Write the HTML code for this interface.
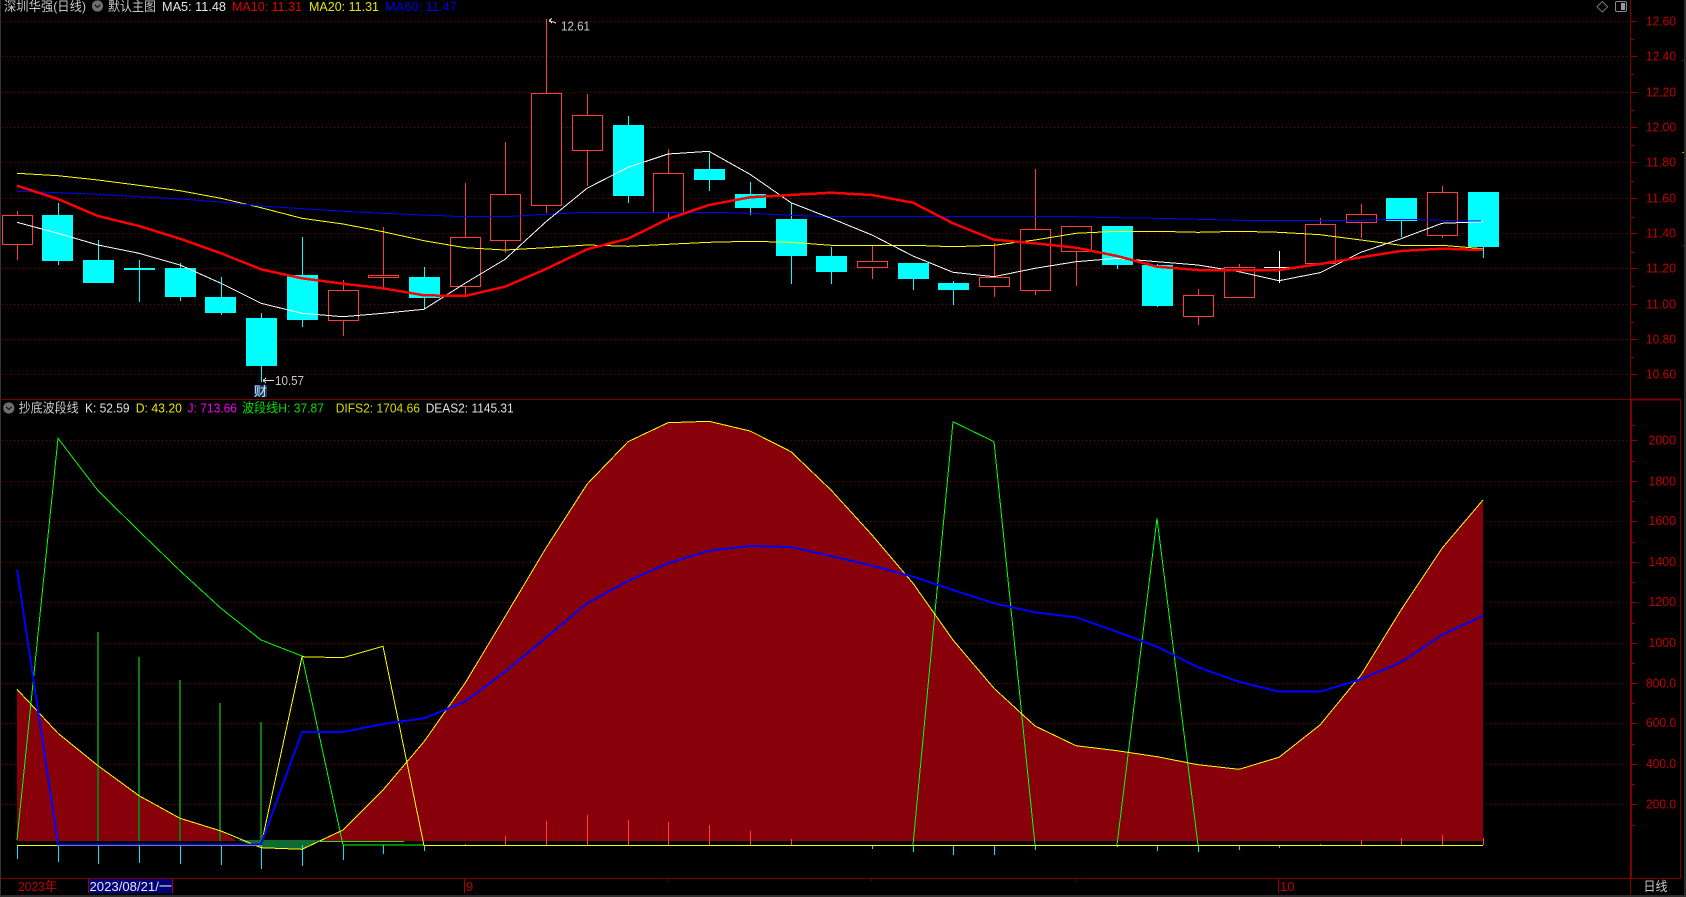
<!DOCTYPE html>
<html><head><meta charset="utf-8"><title>深圳华强</title>
<style>
html,body{margin:0;padding:0;background:#000;width:1686px;height:897px;overflow:hidden}
svg{display:block;position:absolute;left:0;top:0}
text{font-family:"Liberation Sans","Noto Sans CJK SC",sans-serif;font-size:13px}
</style></head>
<body>
<svg width="1686" height="897" viewBox="0 0 1686 897" xmlns="http://www.w3.org/2000/svg">
<rect width="1686" height="897" fill="#000"/>
<g shape-rendering="crispEdges">
<rect x="0" y="0" width="1" height="895" fill="#333"/>
<!-- grid -->
<path fill="none" stroke="#8a0000" stroke-width="1" stroke-dasharray="1 3" d="M2 21.5H1630M2 56.5H1630M2 92.5H1630M2 127.5H1630M2 162.5H1630M2 198.5H1630M2 233.5H1630M2 268.5H1630M2 304.5H1630M2 339.5H1630M2 374.5H1630M2 440.5H1630M2 481.5H1630M2 521.5H1630M2 562.5H1630M2 602.5H1630M2 643.5H1630M2 683.5H1630M2 723.5H1630M2 764.5H1630M2 804.5H1630"/>
<!-- frame -->
<path fill="none" stroke="#800000" stroke-width="1" d="M0 399.5H1681M0 878.5H1681M1630.5 0V896M1680.5 400V878M668.5 879V881M871.5 879V881M1075.5 879V881"/>
<path fill="none" stroke="#800000" stroke-width="2" d="M1631 400V878M1631 399.5H1681"/>
<path fill="none" stroke="#900000" stroke-width="1" d="M1631 21.5H1637M1631 56.5H1637M1631 92.5H1637M1631 127.5H1637M1631 162.5H1637M1631 198.5H1637M1631 233.5H1637M1631 268.5H1637M1631 304.5H1637M1631 339.5H1637M1631 374.5H1637M1631 39.5H1634M1631 74.5H1634M1631 110.5H1634M1631 145.5H1634M1631 181.5H1634M1631 217.5H1634M1631 252.5H1634M1631 286.5H1634M1631 322.5H1634M1631 357.5H1634M1632 440.5H1637M1632 481.5H1637M1632 521.5H1637M1632 562.5H1637M1632 602.5H1637M1632 643.5H1637M1632 683.5H1637M1632 723.5H1637M1632 764.5H1637M1632 804.5H1637M1632 425.5H1635M1632 461.5H1635M1632 501.5H1635M1632 542.5H1635M1632 582.5H1635M1632 623.5H1635M1632 663.5H1635M1632 703.5H1635M1632 744.5H1635M1632 784.5H1635M1632 825.5H1635"/>
<rect x="1684" y="0" width="2" height="895" fill="#2a2a2a"/>
<rect x="1682" y="60" width="2" height="1" fill="#800000"/>
<rect x="1682" y="152" width="2" height="1" fill="#b09000"/>
<rect x="1682" y="245" width="2" height="1" fill="#800000"/>
<rect x="0" y="895" width="1686" height="2" fill="#2e2e2e"/>

<!-- candles wicks -->
<path fill="none" stroke="#ff3c3c" stroke-width="1" d="M17.5 211V260M343.5 280V336M383.5 227V290M465.5 183V297M505.5 142V253M546.5 19V213M587.5 94V186M668.5 149V218M872.5 246V279M994.5 243V297M1035.5 169V295M1076.5 226V286M1198.5 289V325M1239.5 264V298M1320.5 218V264M1361.5 204V238M1442.5 186V238"/>
<path fill="none" stroke="#00ffff" stroke-width="1" d="M58.5 203V265M98.5 240V283M139.5 260V302M180.5 263V301M221.5 277V315M261.5 313V382M302.5 237V327M424.5 267V309M628.5 116V203M709.5 153V191M750.5 182V215M791.5 203V284M831.5 247V284M913.5 263V290M953.5 281V305M1117.5 226V269M1157.5 264V307M1401.5 198V237M1483.5 192V258"/>
<!-- red bodies -->
<g fill="#000" stroke="#ff3c3c" stroke-width="1">
<rect x="2.5" y="215.5" width="30" height="29"/>
<rect x="328.5" y="290.5" width="30" height="30"/>
<rect x="368.5" y="275.5" width="30" height="2"/>
<rect x="450.5" y="237.5" width="30" height="49"/>
<rect x="490.5" y="194.5" width="30" height="46"/>
<rect x="531.5" y="93.5" width="30" height="112"/>
<rect x="572.5" y="115.5" width="30" height="35"/>
<rect x="653.5" y="173.5" width="30" height="39"/>
<rect x="857.5" y="261.5" width="30" height="6"/>
<rect x="979.5" y="277.5" width="30" height="9"/>
<rect x="1020.5" y="229.5" width="30" height="61"/>
<rect x="1061.5" y="226.5" width="30" height="25"/>
<rect x="1183.5" y="295.5" width="30" height="21"/>
<rect x="1224.5" y="267.5" width="30" height="30"/>
<rect x="1305.5" y="224.5" width="30" height="39"/>
<rect x="1346.5" y="214.5" width="30" height="8"/>
<rect x="1427.5" y="192.5" width="30" height="43"/>
</g>
<!-- cyan bodies -->
<g fill="#00ffff">
<rect x="42" y="215" width="31" height="46"/>
<rect x="83" y="260" width="31" height="23"/>
<rect x="124" y="268" width="31" height="2"/>
<rect x="165" y="268" width="31" height="29"/>
<rect x="205" y="297" width="31" height="16"/>
<rect x="246" y="318" width="31" height="48"/>
<rect x="287" y="275" width="31" height="45"/>
<rect x="409" y="277" width="31" height="21"/>
<rect x="613" y="125" width="31" height="71"/>
<rect x="694" y="169" width="31" height="11"/>
<rect x="735" y="194" width="31" height="14"/>
<rect x="776" y="219" width="31" height="37"/>
<rect x="816" y="256" width="31" height="16"/>
<rect x="898" y="263" width="31" height="16"/>
<rect x="938" y="283" width="31" height="7"/>
<rect x="1102" y="226" width="31" height="39"/>
<rect x="1142" y="265" width="31" height="41"/>
<rect x="1386" y="198" width="31" height="23"/>
<rect x="1468" y="192" width="31" height="55"/>
</g>
<path fill="none" stroke="#fff" stroke-width="1" d="M1279.5 251V283M1264 267.5H1294"/>
<!-- MA lines -->
<polyline fill="none" stroke="#ffff00" stroke-width="1" points="17,173.3 58,175.7 98,180 139,185.3 180,190.7 221,198.3 261,207.7 302,218.3 343,224 383,231.7 424,240.7 465,247.7 505,250 546,247.7 587,245 628,246.3 668,244.3 709,242.3 750,241.3 791,242.3 831,245.3 872,245.3 913,245.3 953,246.7 994,245.3 1035,240 1076,233.3 1117,231.3 1157,231.3 1198,232.3 1239,231.3 1279,232.3 1320,234.7 1361,240 1401,245.3 1442,245.3 1483,248.7"/>
<polyline fill="none" stroke="#0000ff" stroke-width="1" points="17,191.3 58,192.7 98,194.3 139,196.7 180,199 221,202 261,206 302,208.7 343,211.3 383,213.3 424,215 465,216.7 505,216.7 546,214.3 587,212.3 628,212.3 668,212.3 709,212.3 750,213.3 791,215.3 831,216.7 872,216.7 913,216.7 953,216.7 994,216.7 1035,216.7 1076,216.7 1117,217.7 1157,218.3 1198,219.3 1239,220.3 1279,220.3 1320,220.3 1361,220.3 1401,219.3 1442,220.3 1483,221.3"/>
<polyline fill="none" stroke="#ffffff" stroke-width="1" points="17,222.3 58,233.3 98,245 139,253.3 180,265 221,283.3 261,303.3 302,313.3 343,316.7 383,313.3 424,309.3 465,283.3 505,259.3 546,221.7 587,188.3 628,167.3 668,154 709,151.3 750,174.3 791,202.7 831,218.3 872,235 913,256 953,272.3 994,276.7 1035,268.3 1076,261.7 1117,258.3 1157,261.7 1198,265 1239,271.7 1279,280.7 1320,272.7 1361,252.3 1401,238.7 1442,223.3 1483,221.7"/>
<polyline fill="none" stroke="#ff0000" stroke-width="2.5" points="17,185.7 58,199 98,216 139,226 180,238.7 221,253.3 261,269.3 302,278.3 343,283.7 383,288.3 424,295.3 465,296 505,286.7 546,269 587,249.3 628,238.7 668,219 709,205 750,197.3 791,195 831,192.7 872,195 913,202.7 953,223.3 994,239.7 1035,243.3 1076,247.7 1117,256 1157,266.7 1198,270 1239,270 1279,270 1320,264 1361,257.3 1401,251 1442,248.7 1483,250"/>

<!-- lower panel fills -->
<polygon fill="#87000a" points="17,841 17,689.3 58,733.3 98,765.7 139,795.7 180,818.3 221,831 237,841 320,841 343,830 383,790 424,741.7 465,683.3 505,616.7 546,548 587,484.3 628,441.7 668,422.7 709,421.3 750,431 791,451.7 831,490 872,535 913,583.3 953,640 994,688.3 1035,726 1076,745.7 1117,750.7 1157,756.7 1198,764.7 1239,769.3 1279,757.3 1320,725 1361,675 1401,610 1442,548.3 1483,500 1483,841"/>
<polygon fill="#0e6b33" points="237,840 261,847.7 302,849.3 320,840"/>
<!-- green bars -->
<path fill="none" stroke="#0d7a0d" stroke-width="2" d="M98 632V841M139 657V841M180 680V841M220 703V841M261 722V841"/>
<!-- sticks -->
<path fill="none" stroke="#00e8ff" stroke-width="1" d="M17.5 845V859M58.5 845V862M98.5 845V864M139.5 845V863M180.5 845V864M221.5 845V865M261.5 845V869M302.5 845V866M343.5 845V860M383.5 845V854M424.5 845V851M872.5 845V849M913.5 845V852M953.5 845V855M994.5 845V855M1035.5 845V850M1117.5 845V847M1157.5 845V851M1198.5 845V852M1239.5 845V850M1279.5 845V848"/>
<path fill="none" stroke="#ff4040" stroke-width="1" d="M465.5 844V845M505.5 836V845M546.5 821V845M587.5 815V845M628.5 820V845M668.5 822V845M709.5 825V845M750.5 831V845M791.5 839V845M1320.5 844V845M1361.5 840V845M1401.5 838V845M1442.5 835V845M1483.5 838V845"/>
<!-- green line + level -->
<path fill="none" stroke="#33d633" stroke-width="1" d="M320 841.5H404"/>
<polyline fill="none" stroke="#00ff00" stroke-width="1" points="17,840 58,438.3 98,490.7 139,531 180,570.7 221,608.3 261,640 302,656 343,845 383,845 424,845"/>
<polyline fill="none" stroke="#00ff00" stroke-width="1" points="913,845 953,421.7 994,441.7 1035,845"/>
<polyline fill="none" stroke="#00ff00" stroke-width="1" points="1117,845 1157,518.3 1198,845"/>
<polyline fill="none" stroke="#ffff00" stroke-width="1" points="17,845.5 261,845.5 302,656.7 343,657.7 383,646.3 424,845.5 1483,845.5"/>
<polyline fill="none" stroke="#ffff00" stroke-width="1" points="17,689.3 58,733.3 98,765.7 139,795.7 180,818.3 221,831 261,847.7 302,849.3 343,830 383,790 424,741.7 465,683.3 505,616.7 546,548 587,484.3 628,441.7 668,422.7 709,421.3 750,431 791,451.7 831,490 872,535 913,583.3 953,640 994,688.3 1035,726 1076,745.7 1117,750.7 1157,756.7 1198,764.7 1239,769.3 1279,757.3 1320,725 1361,675 1401,610 1442,548.3 1483,500"/>
<polyline fill="none" stroke="#0000ff" stroke-width="2" points="17,569.3 58,844.3 98,844.3 139,844.3 180,844.3 221,844.3 261,844.3 302,732 343,732 383,724 424,718.3 465,701.7 505,671.7 546,637.7 587,603.3 628,581 668,563.3 709,550.7 750,546 791,547 831,556 872,565.7 913,576.7 953,590 994,603.3 1035,612.3 1076,617.3 1117,631.7 1157,646.7 1198,667.3 1239,681.7 1279,691.7 1320,691.7 1361,679.3 1401,662.3 1442,635 1483,615.7"/>

<!-- annotations -->
<path fill="none" stroke="#ddd" stroke-width="1" d="M556 23L549 20.5M549 20.5L552 18.5M549 20.5L552 23M263 380.5H274M263 380.5L266 378M263 380.5L266 383"/>
<rect x="254" y="385" width="13" height="12" fill="#0a3a70"/>
<!-- bottom date box -->
<rect x="88" y="879" width="85" height="14" fill="#00007a"/>
<path fill="none" stroke="#a00000" stroke-width="1" d="M88.5 879V893M172.5 879V893M464.5 879V893M1278.5 879V893"/>
</g>

<!-- header top -->
<text x="4" y="11" fill="#c8c8c8" textLength="82" lengthAdjust="spacingAndGlyphs">深圳华强(日线)</text>
<circle cx="97.5" cy="6" r="5.6" fill="#6e6e6e"/>
<path d="M94.8 4.8L97.5 7.4L100.2 4.8" fill="none" stroke="#111" stroke-width="1.2"/>
<text x="108" y="11" fill="#c8c8c8" textLength="48" lengthAdjust="spacingAndGlyphs">默认主图</text>
<text x="162" y="11" fill="#e6e6e6" textLength="64" lengthAdjust="spacingAndGlyphs">MA5: 11.48</text>
<text x="232" y="11" fill="#e00000" textLength="70" lengthAdjust="spacingAndGlyphs">MA10: 11.31</text>
<text x="309" y="11" fill="#e6e600" textLength="70" lengthAdjust="spacingAndGlyphs">MA20: 11.31</text>
<text x="385" y="11" fill="#0000e0" textLength="72" lengthAdjust="spacingAndGlyphs">MA60: 11.47</text>

<!-- header lower -->
<circle cx="8.8" cy="408" r="5.6" fill="#6e6e6e"/>
<path d="M6.1 406.8L8.8 409.4L11.5 406.8" fill="none" stroke="#111" stroke-width="1.2"/>
<text x="18.6" y="412.5" fill="#c8c8c8" textLength="60" lengthAdjust="spacingAndGlyphs">抄底波段线</text>
<text x="85" y="412.5" fill="#e0e0e0" textLength="44.6" lengthAdjust="spacingAndGlyphs">K: 52.59</text>
<text x="135.7" y="412.5" fill="#e6e600" textLength="46.3" lengthAdjust="spacingAndGlyphs">D: 43.20</text>
<text x="187.5" y="412.5" fill="#f000f0" textLength="49.5" lengthAdjust="spacingAndGlyphs">J: 713.66</text>
<text x="242" y="412.5" fill="#00e000" textLength="82" lengthAdjust="spacingAndGlyphs">波段线H: 37.87</text>
<text x="335.7" y="412.5" fill="#d8d800" textLength="84.3" lengthAdjust="spacingAndGlyphs">DIFS2: 1704.66</text>
<text x="425.7" y="412.5" fill="#e0e0e0" textLength="88" lengthAdjust="spacingAndGlyphs">DEAS2: 1145.31</text>

<!-- annotations text -->
<text x="561" y="30.5" fill="#c8c8c8" textLength="29" lengthAdjust="spacingAndGlyphs">12.61</text>
<text x="275" y="385" fill="#c8c8c8" textLength="29" lengthAdjust="spacingAndGlyphs">10.57</text>
<text x="254" y="396" fill="#e8e8e8">财</text>

<!-- price axis -->
<g fill="#c00000">
<text x="1646" y="25.5" textLength="30" lengthAdjust="spacingAndGlyphs">12.60</text>
<text x="1646" y="60.5" textLength="30" lengthAdjust="spacingAndGlyphs">12.40</text>
<text x="1646" y="96.5" textLength="30" lengthAdjust="spacingAndGlyphs">12.20</text>
<text x="1646" y="131.5" textLength="30" lengthAdjust="spacingAndGlyphs">12.00</text>
<text x="1646" y="166.5" textLength="30" lengthAdjust="spacingAndGlyphs">11.80</text>
<text x="1646" y="202.5" textLength="30" lengthAdjust="spacingAndGlyphs">11.60</text>
<text x="1646" y="237.5" textLength="30" lengthAdjust="spacingAndGlyphs">11.40</text>
<text x="1646" y="272.5" textLength="30" lengthAdjust="spacingAndGlyphs">11.20</text>
<text x="1646" y="308.5" textLength="30" lengthAdjust="spacingAndGlyphs">11.00</text>
<text x="1646" y="343.5" textLength="30" lengthAdjust="spacingAndGlyphs">10.80</text>
<text x="1646" y="378.5" textLength="30" lengthAdjust="spacingAndGlyphs">10.60</text>
<text x="1648.5" y="444.5" textLength="27.5" lengthAdjust="spacingAndGlyphs">2000</text>
<text x="1648.5" y="485.5" textLength="27.5" lengthAdjust="spacingAndGlyphs">1800</text>
<text x="1648.5" y="525" textLength="27.5" lengthAdjust="spacingAndGlyphs">1600</text>
<text x="1648.5" y="566" textLength="27.5" lengthAdjust="spacingAndGlyphs">1400</text>
<text x="1648.5" y="606" textLength="27.5" lengthAdjust="spacingAndGlyphs">1200</text>
<text x="1648.5" y="647" textLength="27.5" lengthAdjust="spacingAndGlyphs">1000</text>
<text x="1646" y="687.5" textLength="30" lengthAdjust="spacingAndGlyphs">800.0</text>
<text x="1646" y="727" textLength="30" lengthAdjust="spacingAndGlyphs">600.0</text>
<text x="1646" y="768" textLength="30" lengthAdjust="spacingAndGlyphs">400.0</text>
<text x="1646" y="808.5" textLength="30" lengthAdjust="spacingAndGlyphs">200.0</text>
</g>

<!-- top right icons -->
<path d="M1602.3 1.5L1607.6 6.8L1602.3 12L1597 6.8Z" fill="none" stroke="#777" stroke-width="1"/>
<rect x="1615.5" y="1.5" width="11" height="10" rx="1.5" fill="none" stroke="#888" stroke-width="1"/>
<rect x="1621" y="3" width="4" height="7" fill="#999"/>

<!-- bottom axis text -->
<text x="18" y="891" fill="#c00000" textLength="39" lengthAdjust="spacingAndGlyphs">2023年</text>
<text x="89.5" y="891" fill="#e8e8e8" textLength="82.5" lengthAdjust="spacingAndGlyphs">2023/08/21/一</text>
<text x="466" y="891" fill="#c00000">9</text>
<text x="1280" y="891" fill="#c00000">10</text>
<text x="1643.5" y="891" fill="#c8c8c8" textLength="24" lengthAdjust="spacingAndGlyphs">日线</text>
</svg>
</body></html>
